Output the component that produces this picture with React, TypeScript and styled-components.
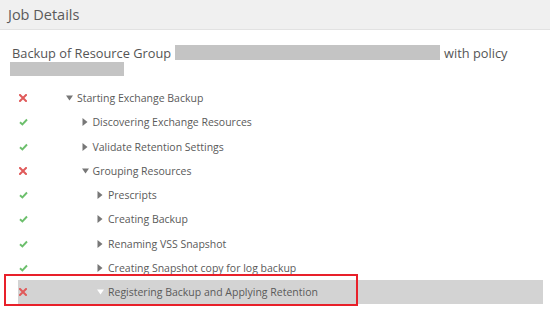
import React from "react";
import styled, { createGlobalStyle } from "styled-components";

const Global = createGlobalStyle`
  html, body { margin: 0; padding: 0; background: #fff; }
  body { font-family: "Open Sans", "Liberation Sans", sans-serif; width: 550px; height: 309px; overflow: hidden; }
`;

const Page = styled.div`
  width: 550px;
  height: 309px;
  display: flex;
  flex-direction: column;
`;

const Header = styled.div`
  height: 30px;
  flex: none;
  background: #f0f0f0;
  border-bottom: 1px solid #e2e2e2;
  display: flex;
  align-items: center;
  padding-left: 8px;
  font-size: 14.5px;
  color: #5a5a5a;
  box-sizing: border-box;
`;

const Title = styled.div`
  padding: 15px 10px 0 12px;
  font-size: 12.8px;
  line-height: 16px;
  color: #555;
`;

const Redact = styled.span<{ $w: number }>`
  display: inline-block;
  width: ${(p) => p.$w}px;
  height: 15px;
  background: #c4c4c4;
  vertical-align: top;
  margin: 0 4px 0 4px;
`;

const Redact2 = styled.div`
  width: 114px;
  height: 14px;
  background: #c4c4c4;
  margin: 1px 0 0 -2px;
`;

const List = styled.div`
  margin-top: 10px;
  display: flex;
  flex-direction: column;
  padding: 0 7px 0 18px;
`;

const Row = styled.div<{ $sel?: boolean }>`
  position: relative;
  height: 24.25px;
  display: flex;
  align-items: center;
  background: ${(p) => (p.$sel ? "#d3d3d3" : "transparent")};
  font-size: 10.5px;
  color: #5a5a5a;
`;

const IconCell = styled.div`
  width: 47px;
  display: flex;
  align-items: center;
  padding-left: 1px;
`;

const Toggle = styled.span<{ $level: number }>`
  margin-left: ${(p) => p.$level * 15.5}px;
  width: 11px;
  display: inline-flex;
  align-items: center;
`;

const Outline = styled.div`
  position: absolute;
  left: -14px;
  top: -6px;
  width: 354px;
  height: 32px;
  border: 2px solid #e8202a;
  box-sizing: border-box;
  pointer-events: none;
`;

const Cross = () => (
  <svg width="8" height="8" viewBox="0 0 8 8">
    <path d="M1 1 L7 7 M7 1 L1 7" stroke="#e05a5a" strokeWidth="2" strokeLinecap="square" />
  </svg>
);

const Check = () => (
  <svg width="9" height="8" viewBox="0 0 9 8">
    <path d="M1 4.2 L3.4 6.5 L8 1.5" stroke="#6cbf6c" strokeWidth="1.9" fill="none" />
  </svg>
);

const Tri = ({ open, color }: { open: boolean; color: string }) =>
  open ? (
    <svg width="7" height="6" viewBox="0 0 7 6">
      <path d="M0 0.5 L7 0.5 L3.5 5.5 Z" fill={color} />
    </svg>
  ) : (
    <svg width="6" height="8" viewBox="0 0 6 8">
      <path d="M0.5 0 L5.5 4 L0.5 8 Z" fill={color} />
    </svg>
  );

type Item = { ok: boolean; level: number; open: boolean; label: string; sel?: boolean };

const items: Item[] = [
  { ok: false, level: 0, open: true, label: "Starting Exchange Backup" },
  { ok: true, level: 1, open: false, label: "Discovering Exchange Resources" },
  { ok: true, level: 1, open: false, label: "Validate Retention Settings" },
  { ok: false, level: 1, open: true, label: "Grouping Resources" },
  { ok: true, level: 2, open: false, label: "Prescripts" },
  { ok: true, level: 2, open: false, label: "Creating Backup" },
  { ok: true, level: 2, open: false, label: "Renaming VSS Snapshot" },
  { ok: true, level: 2, open: false, label: "Creating Snapshot copy for log backup" },
  { ok: false, level: 2, open: true, label: "Registering Backup and Applying Retention", sel: true },
];

export default function App() {
  return (
    <Page>
      <Global />
      <Header>Job Details</Header>
      <Title>
        Backup of Resource Group
        <Redact $w={265} />
        with policy
        <Redact2 />
      </Title>
      <List>
        {items.map((it, i) => (
          <Row key={i} $sel={it.sel}>
            <IconCell>{it.ok ? <Check /> : <Cross />}</IconCell>
            <Toggle $level={it.level}>
              <Tri open={it.open} color={it.sel ? "#fff" : "#777"} />
            </Toggle>
            {it.label}
            {it.sel && <Outline />}
          </Row>
        ))}
      </List>
    </Page>
  );
}
